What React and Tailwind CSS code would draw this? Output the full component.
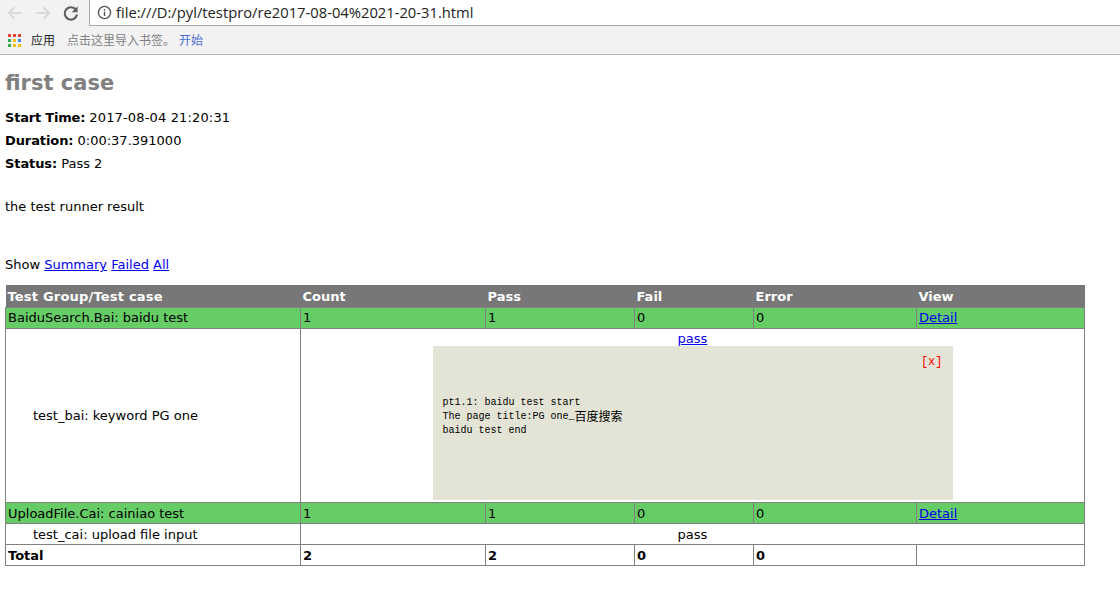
import React from "react";

const V = "[font-family:'DejaVu_Sans',Verdana,sans-serif]";
const td = "border border-[#808080] px-[2px] py-0 align-middle h-[21px] overflow-hidden whitespace-nowrap";
const tl = "border border-[#808080] px-[2px] pt-[2px] pb-0 align-middle h-[21px] overflow-hidden whitespace-nowrap";
const link = "text-[#0000ee] underline";

function GroupRow({ name, cell }) {
  return (
    <tr className="bg-[#66cc66]">
      <td className={cell}>{name}</td>
      <td className={cell}>1</td>
      <td className={cell}>1</td>
      <td className={cell}>0</td>
      <td className={cell}>0</td>
      <td className={cell}><a className={link}>Detail</a></td>
    </tr>
  );
}

export default function App() {
  return (
    <div className={`h-[616px] w-[1120px] overflow-hidden bg-white text-[13px] leading-[16px] text-black ${V}`}>
      <div className="h-[55px] border-b border-[#b9b9b9] bg-[#f2f2f2]">
        <div className="flex h-[26px] items-center">
          <div className="flex h-full w-[89px] items-center pl-[6px]">
            <svg width="18" height="18" viewBox="0 0 18 18" fill="none" stroke="#d9d9d9" strokeWidth="2"><path d="M15.5 9H3M8.5 3.2 2.8 9l5.7 5.8" /></svg>
            <svg className="ml-[10px]" width="18" height="18" viewBox="0 0 18 18" fill="none" stroke="#d9d9d9" strokeWidth="2"><path d="M2.5 9H15M9.5 3.2 15.2 9l-5.7 5.8" /></svg>
            <svg className="ml-[10px]" width="18" height="18" viewBox="0 0 18 18" fill="none"><path d="M14.2 6.2A6.2 6.2 0 1 0 15 10.5" stroke="#5f5f5f" strokeWidth="2.1" /><path d="M15.6 2.2v6h-6z" fill="#5f5f5f" /></svg>
          </div>
          <div className="flex h-full flex-1 items-center rounded-bl-[2px] border-b border-l border-[#a9a9a9] bg-white pl-[7px] font-['Open_Sans','Noto_Sans',sans-serif] text-[14.75px] text-[#222]">
            <svg width="15" height="15" viewBox="0 0 16 16" fill="none" stroke="#555" strokeWidth="1.5"><circle cx="8" cy="8" r="6.5" /><path d="M8 7v4.6M8 4.2v1.6" /></svg>
            <span className="ml-[4px] -translate-y-[1px]">file:///D:/pyl/testpro/re2017-08-04%2021-20-31.html</span>
          </div>
        </div>
        <div className="flex h-[28px] items-center pl-[8px] font-['Noto_Sans_CJK_SC',sans-serif] text-[12px]">
          <div className="grid grid-cols-3 gap-[2px]">
            <i className="size-[3px] bg-[#ea4335]" /><i className="size-[3px] bg-[#ea4335]" /><i className="size-[3px] bg-[#ea4335]" />
            <i className="size-[3px] bg-[#34a853]" /><i className="size-[3px] bg-[#fbbc05]" /><i className="size-[3px] bg-[#4285f4]" />
            <i className="size-[3px] bg-[#34a853]" /><i className="size-[3px] bg-[#fbbc05]" /><i className="size-[3px] bg-[#fbbc05]" />
          </div>
          <span className="ml-[10px] text-[#222]">应用</span>
          <span className="ml-[12px] text-[#808080]">点击这里导入书签。</span>
          <span className="ml-[4px] text-[#4a6fd8]">开始</span>
        </div>
      </div>

      <div className="px-[5px]">
        <h1 className="mt-[15px] h-[26px] text-[21px] font-bold leading-[26px] text-[#808080]">first case</h1>
        <p className="mt-[14px]"><b className="tracking-[-0.2px]">Start Time:</b> <span className="tracking-[0.15px]">2017-08-04 21:20:31</span></p>
        <p className="mt-[7px]"><b className="tracking-[-0.1px]">Duration:</b> 0:00:37.391000</p>
        <p className="mt-[7px]"><b className="tracking-[-0.1px]">Status:</b> Pass 2</p>
        <p className="mt-[27px]">the test runner result</p>
        <p className="mt-[42px]">
          Show <a className={link}>Summary</a> <a className={link}>Failed</a> <a className={link}>All</a>
        </p>

        <table className="mt-[12px] w-[1079px] table-fixed border-collapse">
          <colgroup>
            <col className="w-[295px]" /><col className="w-[185px]" /><col className="w-[149px]" />
            <col className="w-[119px]" /><col className="w-[163px]" /><col className="w-[168px]" />
          </colgroup>
          <tbody>
            <tr className="bg-[#777777] font-bold text-white">
              <td className="h-[22px] px-[2px] pt-[2px] tracking-[0.2px]">Test Group/Test case</td>
              <td className="px-[2px] pt-[2px]">Count</td>
              <td className="px-[2px] pt-[2px]">Pass</td>
              <td className="px-[2px] pt-[2px]">Fail</td>
              <td className="px-[2px] pt-[2px]">Error</td>
              <td className="px-[2px] pt-[2px]">View</td>
            </tr>
            <GroupRow name="BaiduSearch.Bai: baidu test" cell={td} />
            <tr>
              <td className={`${td} !pl-[27px] pt-[1px]`}>test_bai: keyword PG one</td>
              <td colSpan={5} className="border border-[#808080] p-0 text-center align-top">
                <div className="mt-[2px] leading-[15px]"><a className={link}>pass</a></div>
                <div className="mx-auto mb-[2px] mt-0 h-[154px] w-[520px] bg-[#e3e4d5] px-[10px] pt-[9px] text-left">
                  <div className="text-right font-['Liberation_Mono',monospace] text-[12px] leading-[14px] text-[#ff0000]">[x]</div>
                  <pre className="mt-[27px] font-['Liberation_Mono',monospace] text-[10px] leading-[14px] text-black">
                    {"pt1.1: baidu test start\nThe page title:PG one_"}
                    <span className="inline-block h-[14px] -translate-y-[1px] align-top font-['Noto_Sans_CJK_SC',sans-serif] text-[12px] leading-[14px]">百度搜索</span>
                    {"\nbaidu test end"}
                  </pre>
                </div>
              </td>
            </tr>
            <GroupRow name="UploadFile.Cai: cainiao test" cell={tl} />
            <tr>
              <td className={`${tl} !pl-[27px]`}>test_cai: upload file input</td>
              <td colSpan={5} className={`${tl} text-center`}>pass</td>
            </tr>
            <tr className="font-bold">
              <td className={tl}>Total</td>
              <td className={tl}>2</td>
              <td className={tl}>2</td>
              <td className={tl}>0</td>
              <td className={tl}>0</td>
              <td className={tl}></td>
            </tr>
          </tbody>
        </table>
      </div>
    </div>
  );
}
